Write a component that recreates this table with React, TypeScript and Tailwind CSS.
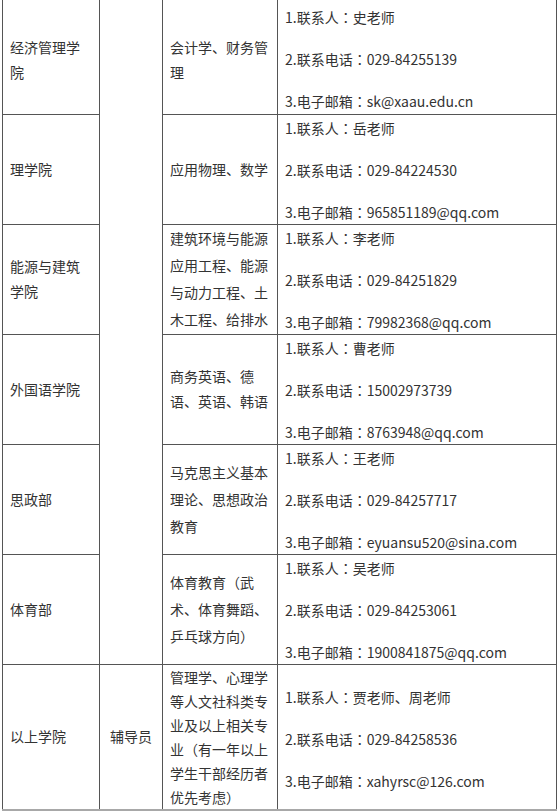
const rows = [
  {
    college: ["经济管理学", "院"],
    majors: ["会计学、财务管", "理"],
    contact: "史老师",
    phone: "029-84255139",
    email: "sk@xaau.edu.cn",
  },
  {
    college: ["理学院"],
    majors: ["应用物理、数学"],
    contact: "岳老师",
    phone: "029-84224530",
    email: "965851189@qq.com",
  },
  {
    college: ["能源与建筑", "学院"],
    majors: ["建筑环境与能源", "应用工程、能源", "与动力工程、土", "木工程、给排水"],
    contact: "李老师",
    phone: "029-84251829",
    email: "79982368@qq.com",
  },
  {
    college: ["外国语学院"],
    majors: ["商务英语、德", "语、英语、韩语"],
    contact: "曹老师",
    phone: "15002973739",
    email: "8763948@qq.com",
  },
  {
    college: ["思政部"],
    majors: ["马克思主义基本", "理论、思想政治", "教育"],
    contact: "王老师",
    phone: "029-84257717",
    email: "eyuansu520@sina.com",
  },
  {
    college: ["体育部"],
    majors: ["体育教育（武", "术、体育舞蹈、", "乒乓球方向）"],
    contact: "吴老师",
    phone: "029-84253061",
    email: "1900841875@qq.com",
  },
];

const last = {
  college: ["以上学院"],
  role: "辅导员",
  majors: [
    "管理学、心理学",
    "等人文社科类专",
    "业及以上相关专",
    "业（有一年以上",
    "学生干部经历者",
    "优先考虑）",
  ],
  contact: "贾老师、周老师",
  phone: "029-84258536",
  email: "xahyrsc@126.com",
};

const cell = "border border-[#555] align-middle px-[7px] py-0";

function Lines({ lines, leading }: { lines: string[]; leading: string }) {
  return (
    <div className={leading}>
      {lines.map((l) => (
        <div key={l} className="whitespace-nowrap">
          {l}
        </div>
      ))}
    </div>
  );
}

// centred full-width colon, as in the source font
const Colon = () => (
  <span style={{ fontFamily: '"Noto Sans CJK JP", sans-serif' }}>：</span>
);

function Contact({
  contact,
  phone,
  email,
  pad = "pt-[2px]",
}: {
  contact: string;
  phone: string;
  email: string;
  pad?: string;
}) {
  return (
    <div className={`flex flex-col gap-[21px] leading-[21px] ${pad}`}>
      <div>
        1.联系人<Colon />
        {contact}
      </div>
      <div>
        2.联系电话<Colon />
        {phone}
      </div>
      <div>
        3.电子邮箱<Colon />
        {email}
      </div>
    </div>
  );
}

export default function App() {
  return (
    <div
      className="h-[812px] w-[558px] overflow-hidden bg-white text-[14px] text-[#333]"
      style={{ fontFamily: '"Noto Sans CJK SC", "Noto Sans", sans-serif' }}
    >
      <table className="ml-[2px] w-[554px] table-fixed border-collapse">
        <colgroup>
          <col className="w-[97px]" />
          <col className="w-[63px]" />
          <col className="w-[115px]" />
          <col className="w-[279px]" />
        </colgroup>
        <tbody>
          {rows.map((r, i) => (
            <tr key={r.email} className={i === 0 ? "h-[114px]" : "h-[110px]"}>
              <td className={`${cell} ${i === 0 ? "border-t-0 pt-[6px]" : ""}`}>
                <Lines lines={r.college} leading="leading-[25px]" />
              </td>
              {i === 0 && <td rowSpan={6} className={`${cell} border-t-0`} />}
              <td className={`${cell} ${i === 0 ? "border-t-0 pt-[6px]" : ""}`}>
                <Lines
                  lines={r.majors}
                  leading={r.majors.length > 2 ? "leading-[27px]" : "leading-[25px]"}
                />
              </td>
              <td className={`${cell} ${i === 0 ? "border-t-0 pt-[4px]" : ""}`}>
                <Contact contact={r.contact} phone={r.phone} email={r.email} />
              </td>
            </tr>
          ))}
          <tr className="h-[146px]">
            <td className={`${cell} border-b-2 border-b-[#a8a8a8]`}>
              <Lines lines={last.college} leading="leading-[25px]" />
            </td>
            <td className={`${cell} border-b-2 border-b-[#a8a8a8] text-center`}>
              {last.role}
            </td>
            <td className={`${cell} border-b-2 border-b-[#a8a8a8]`}>
              <Lines lines={last.majors} leading="leading-[24px]" />
            </td>
            <td className={`${cell} border-b-2 border-b-[#a8a8a8]`}>
              <Contact
                contact={last.contact}
                phone={last.phone}
                email={last.email}
                pad="pt-[6px]"
              />
            </td>
          </tr>
        </tbody>
      </table>
    </div>
  );
}
